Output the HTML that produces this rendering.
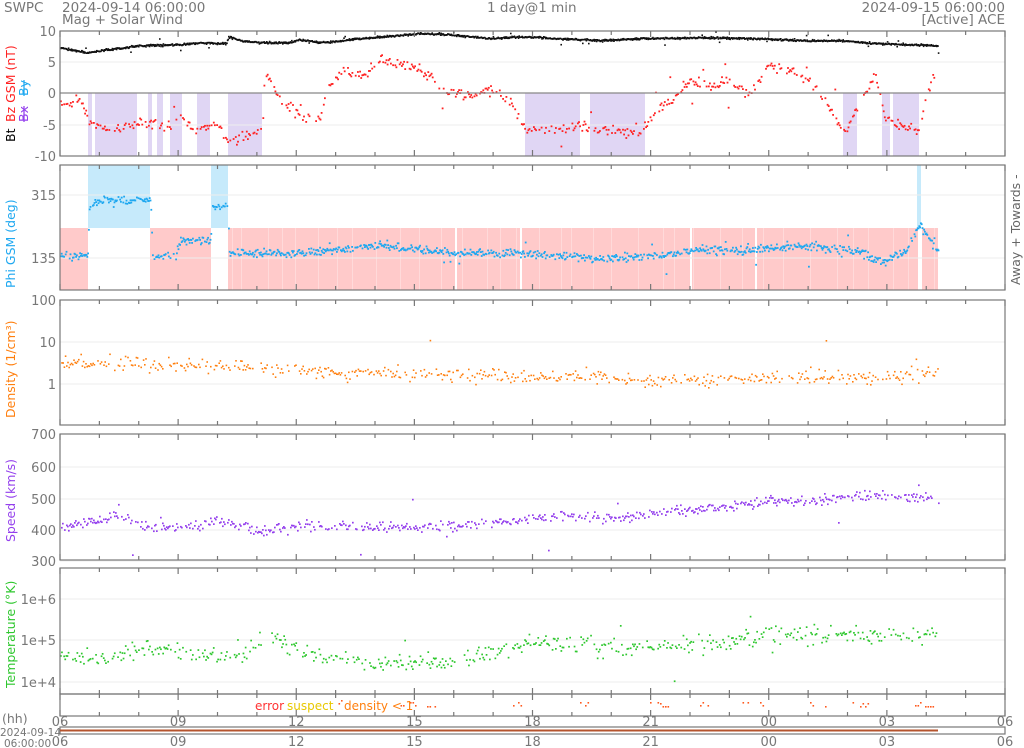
<!DOCTYPE html>
<html><head><meta charset="utf-8"><style>
html,body{margin:0;padding:0;background:#fff;width:1024px;height:748px;overflow:hidden}
svg{position:absolute;left:0;top:0}
text{font-family:"DejaVu Sans","Liberation Sans",sans-serif}
</style></head><body>
<svg id="s" width="1024" height="748" xmlns="http://www.w3.org/2000/svg">
<g id="bg"></g>
<g id="grid" stroke="#eee" stroke-width="1"></g>
<g id="dots"></g>
<g id="frames" fill="none" stroke="#777" stroke-width="1.2"></g>
<g fill="#777" font-size="13.5">
<text x="4" y="12">SWPC</text>
<text x="62" y="12">2024-09-14 06:00:00</text>
<text x="62" y="24">Mag + Solar Wind</text>
<text x="487" y="12">1 day@1 min</text>
<text x="1005" y="12" text-anchor="end">2024-09-15 06:00:00</text>
<text x="1005" y="24" text-anchor="end">[Active] ACE</text>
</g>
<g id="lbl" fill="#777" font-size="13" text-anchor="end"></g>
<g font-size="12.5">
<text transform="translate(15,142) rotate(-90)" fill="#000">Bt</text>
<text transform="translate(15,122) rotate(-90)" fill="#f22">Bz GSM (nT)</text>
<text transform="translate(28,122) rotate(-90)" fill="#9440ed" text-decoration="line-through">Bx</text>
<text transform="translate(28,96) rotate(-90)" fill="#1fa8f0" text-decoration="line-through">By</text>
<text transform="translate(15,288) rotate(-90)" fill="#1fa8f0">Phi GSM (deg)</text>
<text transform="translate(15,418) rotate(-90)" fill="#ff7f0e">Density (1/cm³)</text>
<text transform="translate(15,542) rotate(-90)" fill="#9440ed">Speed (km/s)</text>
<text transform="translate(15,688) rotate(-90)" fill="#2ec72e">Temperature (°K)</text>
<text transform="translate(1020,285) rotate(-90)" fill="#666">Away +   Towards -</text>
<text x="255" y="710" fill="#f33" font-size="12">error</text>
<text x="287" y="710" fill="#e8c800" font-size="12">suspect</text>
<text x="344" y="710" fill="#ff7f0e" font-size="12">density &lt; 1</text>
<text x="2" y="723" fill="#777">(hh)</text>
<text x="0" y="736" fill="#777" font-size="10.5">2024-09-14</text>
<text x="4" y="747" fill="#777" font-size="10.5">06:00:00</text>
</g>
<g id="xl" fill="#777" font-size="13" text-anchor="middle"></g>
</svg>
<script>
var NS="http://www.w3.org/2000/svg";
function el(p,t,a){var e=document.createElementNS(NS,t);for(var k in a)if(k!='txt')e.setAttribute(k,a[k]);if(a.txt){e.textContent=a.txt;}p.appendChild(e);return e;}
var bg=document.getElementById('bg'),grid=document.getElementById('grid'),dots=document.getElementById('dots'),fr=document.getElementById('frames'),lbl=document.getElementById('lbl'),xl=document.getElementById('xl');
var X0=60,X1=1005;
var panels=[[31,156],[165,290],[300,425],[434,560],[568,694],[694,716]];
var seed=7;function rnd(){seed=(seed*16807)%2147483647;return seed/2147483647;}
function g(){return (rnd()+rnd()+rnd()-1.5);}
function rect(x1,x2,y1,y2,c){el(bg,'rect',{x:x1,y:y1,width:x2-x1,height:y2-y1,fill:c});}
[[88,92],[95,137],[148,152],[157,163],[170,182],[197,210],[228,262],[525,580],[590,645],[843,857],[882,890],[893,919]].forEach(function(r){rect(r[0],r[1],93,156,'#e0d6f4');});
rect(60,88,228,290,'#ffcaca');rect(150,211,228,290,'#ffcaca');rect(228,938,228,290,'#ffcaca');
rect(88,150,165,228,'#c6eafb');rect(211,228,165,228,'#c6eafb');rect(917,921,165,228,'#c6eafb');
for(var sx=232;sx<938;sx+=9+Math.floor(rnd()*20)){rect(sx,sx+0.6,228,290,'#ffe6e6');}
[[455,457],[520,522],[690,692],[755,757],[918,922]].forEach(function(r){rect(r[0],r[1],228,290,'#fff');});
var yt=[[[31,'10'],[62,'5'],[93,'0'],[125,'-5'],[156,'-10']],[[195,'315'],[258,'135']],[[300,'100'],[342,'10'],[384,'1']],[[434,'700'],[467,'600'],[499,'500'],[530,'400'],[561,'300']],[[599,'1e+6'],[640,'1e+5'],[682,'1e+4']]];
yt.forEach(function(a){a.forEach(function(t){el(grid,'line',{x1:X0,x2:X1,y1:t[0],y2:t[0]});el(lbl,'text',{x:56,y:t[0]+5,txt:t[1]});});});
el(fr,'line',{x1:X0,x2:X1,y1:93,y2:93,stroke:'#888'});
panels.forEach(function(p){el(fr,'rect',{x:X0,y:p[0],width:X1-X0,height:p[1]-p[0]});
 for(var h=0;h<=24;h++){var x=X0+h*(X1-X0)/24,L=h%3==0?6:4;el(fr,'line',{x1:x,x2:x,y1:p[0],y2:p[0]+L});el(fr,'line',{x1:x,x2:x,y1:p[1],y2:p[1]-L});}});
el(fr,'rect',{x:X0,y:727,width:X1-X0,height:7});
el(fr,'line',{x1:X0,x2:938,y1:730.5,y2:730.5,stroke:'#b5542e','stroke-width':2});
var hl=['06','09','12','15','18','21','00','03','06'];
hl.forEach(function(h,i){var x=X0+i*(X1-X0)/8;el(xl,'text',{x:x,y:726,txt:h});el(xl,'text',{x:x,y:746,txt:h});});
function interp(k,x){for(var i=0;i<k.length-1;i++){if(x<=k[i+1][0]){var t=(x-k[i][0])/(k[i+1][0]-k[i][0]);return k[i][1]+t*(k[i+1][1]-k[i][1]);}}return k[k.length-1][1];}
function series(k,col,noise,step,y1,y2,sparse,r){for(var x=60;x<=938;x+=step){if(rnd()<sparse)continue;var y=interp(k,x)+g()*noise;if(rnd()<0.03)y+=g()*noise*5;if(y<y1||y>y2)continue;el(dots,'rect',{x:x.toFixed(1),y:y.toFixed(1),width:r,height:r,fill:col});}}
series([[60,47],[85,52],[100,50],[140,45],[180,44],[200,42],[226,43],[228,36],[240,40],[260,42],[290,42],[300,39],[320,42],[360,38],[420,33],[450,34],[490,38],[520,36],[560,38],[600,40],[640,38],[700,37],[760,38],[800,40],[840,40],[880,43],[938,45]],'#111',1,0.6,31,156,0,1.6);
series([[60,103],[80,100],[88,120],[110,130],[140,122],[170,125],[180,115],[195,130],[215,125],[228,140],[262,130],[264,70],[280,100],[300,115],[320,118],[325,90],[340,70],[360,75],[380,60],[410,65],[430,75],[445,90],[470,95],[490,90],[510,100],[525,128],[560,128],[580,125],[600,130],[640,132],[655,110],[670,100],[690,80],[710,85],[730,80],[750,95],[765,65],[790,70],[810,80],[830,110],[845,130],[855,110],[865,90],[875,75],[885,120],[900,125],[918,130],[925,100],[932,75],[938,80]],'#f22',5,1.1,31,156,0.3,1.8);
series([[60,255],[87,255],[89,205],[100,200],[150,200],[152,255],[175,255],[180,240],[210,240],[212,208],[227,205],[229,252],[300,252],[380,245],[450,252],[520,252],[600,258],[660,255],[700,248],[740,250],[800,245],[860,250],[880,262],[905,250],[915,232],[920,225],[938,252]],'#1fa8f0',4,0.8,165,290,0.15,1.8);
series([[60,362],[230,365],[330,372],[500,376],[540,376],[600,375],[650,382],[700,380],[760,378],[800,375],[860,378],[938,372]],'#ff7f0e',7,1.2,300,425,0.3,1.6);
series([[60,527],[90,520],[120,515],[150,527],[200,525],[215,520],[260,530],[300,525],[400,527],[460,525],[520,520],[560,516],[620,517],[680,510],[740,505],[770,500],[800,500],[860,495],[900,495],[938,500]],'#9440ed',5,1,434,560,0.3,1.7);
series([[60,650],[90,660],[150,648],[200,655],[240,655],[270,635],[300,650],[340,660],[400,663],[460,660],[500,650],[540,640],[600,648],[700,645],[760,637],[800,635],[938,632]],'#2ec72e',9,1.1,568,694,0.35,1.7);
[[336,700],[398,702],[410,702],[427,703],[513,702],[580,702],[650,702],[660,703],[700,702],[740,702],[760,702],[810,702],[820,703],[850,702],[860,703],[915,702],[925,703]].forEach(function(f){for(var i=0;i<4;i++){if(rnd()<0.6)el(dots,'rect',{x:f[0]+i*2.5,y:f[1]+(rnd()<0.5?0:3),width:1.6,height:1.6,fill:'#ff5a1e'});}});
</script>
</body></html>
